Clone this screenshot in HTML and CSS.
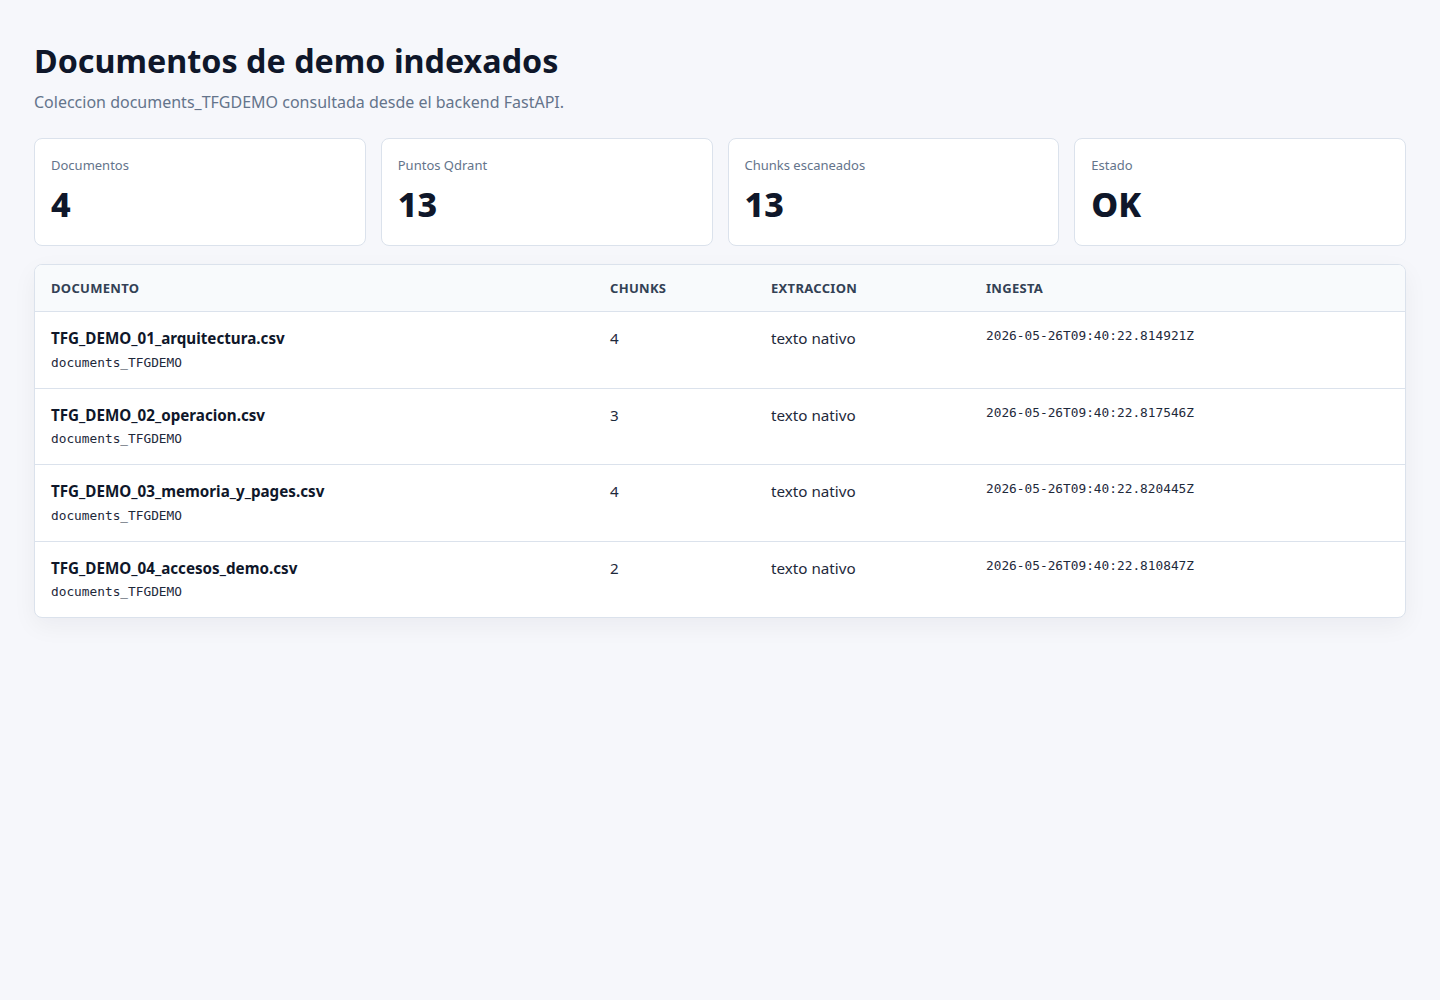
FILE: index.html
```html
<!DOCTYPE html>
<html lang="es">
<head>
    <meta charset="UTF-8">
    <meta name="viewport" content="width=device-width, initial-scale=1.0">
    <title>Documentos de demo indexados</title>
    <link rel="stylesheet" href="styles.css">
</head>
<body>

<div class="page">
    <h1>Documentos de demo indexados</h1>
    <p class="subtitle">Coleccion documents_TFGDEMO consultada desde el backend FastAPI.</p>

    <!-- Stats -->
    <div class="stats">
        <div class="stat-card">
            <div class="stat-label">Documentos</div>
            <div class="stat-value">4</div>
        </div>
        <div class="stat-card">
            <div class="stat-label">Puntos Qdrant</div>
            <div class="stat-value">13</div>
        </div>
        <div class="stat-card">
            <div class="stat-label">Chunks escaneados</div>
            <div class="stat-value">13</div>
        </div>
        <div class="stat-card">
            <div class="stat-label">Estado</div>
            <div class="stat-value">OK</div>
        </div>
    </div>

    <!-- Documents table -->
    <div class="table-wrap">
        <table>
            <thead>
                <tr>
                    <th class="col-doc">Documento</th>
                    <th class="col-chunks">Chunks</th>
                    <th class="col-ext">Extraccion</th>
                    <th>Ingesta</th>
                </tr>
            </thead>
            <tbody>
                <tr>
                    <td>
                        <div class="doc-name">TFG_DEMO_01_arquitectura.csv</div>
                        <div class="doc-coll">documents_TFGDEMO</div>
                    </td>
                    <td>4</td>
                    <td>texto nativo</td>
                    <td class="mono">2026-05-26T09:40:22.814921Z</td>
                </tr>
                <tr>
                    <td>
                        <div class="doc-name">TFG_DEMO_02_operacion.csv</div>
                        <div class="doc-coll">documents_TFGDEMO</div>
                    </td>
                    <td>3</td>
                    <td>texto nativo</td>
                    <td class="mono">2026-05-26T09:40:22.817546Z</td>
                </tr>
                <tr>
                    <td>
                        <div class="doc-name">TFG_DEMO_03_memoria_y_pages.csv</div>
                        <div class="doc-coll">documents_TFGDEMO</div>
                    </td>
                    <td>4</td>
                    <td>texto nativo</td>
                    <td class="mono">2026-05-26T09:40:22.820445Z</td>
                </tr>
                <tr>
                    <td>
                        <div class="doc-name">TFG_DEMO_04_accesos_demo.csv</div>
                        <div class="doc-coll">documents_TFGDEMO</div>
                    </td>
                    <td>2</td>
                    <td>texto nativo</td>
                    <td class="mono">2026-05-26T09:40:22.810847Z</td>
                </tr>
            </tbody>
        </table>
    </div>
</div>

</body>
</html>
```

FILE: styles.css
```css
body {
    font-family: "Noto Sans", "Open Sans", sans-serif;
    margin: 0;
    background-color: #f6f7fb;
    color: #0f172a;
}

.page {
    padding: 39px 34px 34px;
}

h1 {
    font-size: 32.3px;
    font-weight: 700;
    line-height: 42px;
    margin: 0;
    color: #0f172a;
}
.subtitle {
    margin: 10px 0 0;
    font-size: 16px;
    line-height: 22px;
    color: #64748b;
}

/* Stat cards */
.stats {
    display: grid;
    grid-template-columns: repeat(4, 1fr);
    gap: 15px;
    margin-top: 25px;
}
.stat-card {
    background: white;
    border: 1px solid #dbe2ec;
    border-radius: 8px;
    padding: 16px 16px 19px;
}
.stat-label {
    font-size: 13px;
    line-height: 20px;
    color: #64748b;
}
.stat-value {
    font-size: 34px;
    font-weight: 800;
    line-height: 44px;
    margin-top: 7px;
    color: #0f172a;
}

/* Table */
.table-wrap {
    margin-top: 18px;
    background: white;
    border: 1px solid #dbe2ec;
    border-radius: 8px;
    overflow: hidden;
    box-shadow: 0 8px 24px rgba(15, 23, 42, 0.05);
}
table {
    width: 100%;
    border-collapse: collapse;
}
th, td {
    padding: 16px;
    text-align: left;
    vertical-align: top;
}
th {
    background-color: #f8fafc;
    font-size: 13px;
    font-weight: 700;
    letter-spacing: 0.3px;
    text-transform: uppercase;
    color: #334155;
    line-height: 14px;
    border-bottom: 1px solid #dbe2ec;
}
td {
    font-size: 15.2px;
    line-height: 22px;
    padding-top: 15px;
    padding-bottom: 17px;
    color: #1e293b;
    border-bottom: 1px solid #dbe2ec;
}
td.mono {
    padding-top: 16px;
}
tbody tr:last-child td {
    border-bottom: none;
}
.col-doc {
    width: 527px;
}
.col-chunks {
    width: 129px;
}
.col-ext {
    width: 183px;
}
.doc-name {
    font-weight: 700;
    color: #0f172a;
}
.doc-coll {
    font-family: "DejaVu Sans Mono", monospace;
    font-size: 12.8px;
    line-height: 16px;
    margin-top: 5.5px;
    color: #1e293b;
}
.mono {
    font-family: "DejaVu Sans Mono", monospace;
    font-size: 12.8px;
    line-height: 16px;
    color: #1e293b;
}
```
